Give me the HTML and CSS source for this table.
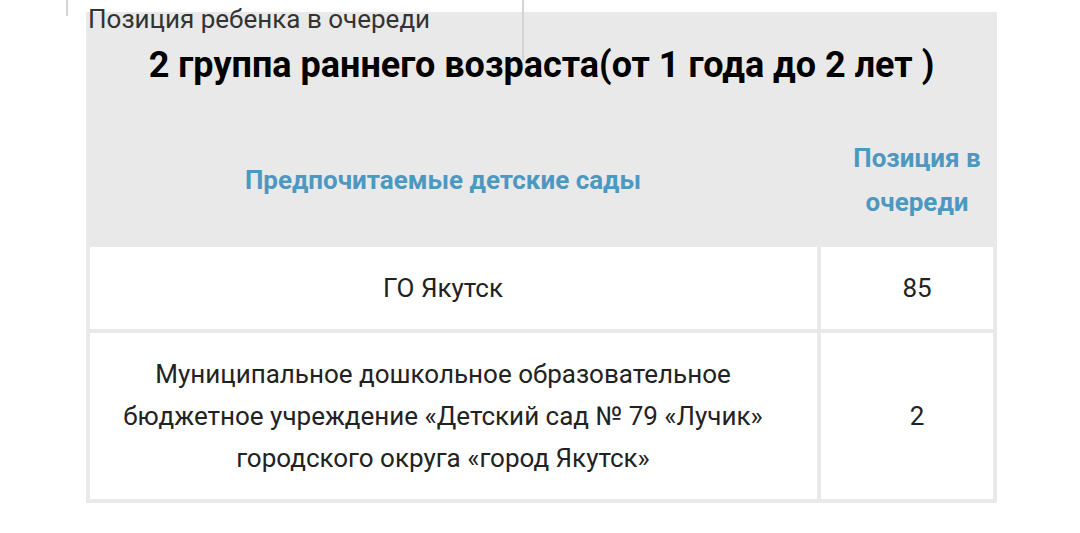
FILE: index.html
```html
<!DOCTYPE html>
<html lang="ru">
<head>
<meta charset="utf-8">
<title>Позиция ребенка в очереди</title>
<link rel="stylesheet" href="styles.css">
</head>
<body>
<div class="page">
  <span class="rule rule-a"></span>
  <span class="rule rule-b"></span>
  <section class="panel">
    <div class="label">Позиция ребенка в очереди</div>
    <h2 class="title">2 группа раннего возраста(от 1 года до 2 лет )</h2>
    <table class="queue">
      <thead>
        <tr>
          <th class="c1">Предпочитаемые детские сады</th>
          <th class="c2">Позиция в очереди</th>
        </tr>
      </thead>
      <tbody>
        <tr>
          <td class="c1">ГО Якутск</td>
          <td class="c2">85</td>
        </tr>
        <tr>
          <td class="c1">Муниципальное дошкольное образовательное бюджетное учреждение «Детский сад № 79 «Лучик» городского округа «город Якутск»</td>
          <td class="c2">2</td>
        </tr>
      </tbody>
    </table>
  </section>
</div>
</body>
</html>
```

FILE: styles.css
```css
html, body {
  margin: 0;
  padding: 0;
  background: #ffffff;
}

body {
  font-family: Roboto, "Noto Sans", Arial, sans-serif;
  color: #222222;
}

.page {
  position: relative;
  padding: 12px 0 0 86px;
}

.rule {
  position: absolute;
  top: 0;
  width: 2px;
  background: #d4d4d4;
}

.rule-a {
  left: 66px;
  height: 16px;
}

.rule-b {
  left: 522px;
  height: 60px;
  z-index: 2;
}

.panel {
  position: relative;
  display: flow-root;
  width: 911px;
  background: #e9e9e9;
}

.label {
  position: relative;
  z-index: 3;
  margin-top: -8px;
  padding-left: 2px;
  font-size: 26px;
  line-height: 30px;
  color: #333333;
}

.title {
  position: relative;
  z-index: 3;
  margin: 10px 0 0;
  text-align: center;
  font-size: 36px;
  font-weight: 700;
  line-height: 42px;
  color: #000000;
}

.queue {
  width: 911px;
  margin-top: 27px;
  border-collapse: separate;
  border-spacing: 4px;
  table-layout: fixed;
}

.queue th {
  font-size: 26px;
  font-weight: 700;
  color: #4d98c1;
  line-height: 44px;
  padding-top: 19px;
  padding-bottom: 19px;
  text-align: center;
  vertical-align: middle;
}

.queue td {
  background: #ffffff;
  font-size: 26px;
  line-height: 42px;
  padding-top: 20px;
  padding-bottom: 20px;
  text-align: center;
  vertical-align: middle;
  color: #222222;
}

.queue .c1 {
  width: 727px;
  box-sizing: border-box;
  padding-left: 23px;
  padding-right: 44px;
}

.queue .c2 {
  padding-left: 28px;
  padding-right: 8px;
}
```
